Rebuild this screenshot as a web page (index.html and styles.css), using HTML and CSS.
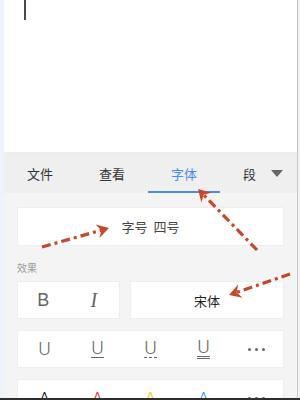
FILE: index.html
```html
<!DOCTYPE html>
<html lang="zh">
<head>
<meta charset="utf-8">
<link rel="stylesheet" href="styles.css">
</head>
<body>
<div class="screen">
  <div class="frame">
    <div class="left-strip"></div>
    <div class="main">
      <div class="editor"><span class="cursor"></span></div>
      <div class="tabbar">
        <div class="tabs">
          <div class="tab">文件</div>
          <div class="tab">查看</div>
          <div class="tab active">字体</div>
          <div class="tab last">段</div>
        </div>
        <div class="more"><span class="tri"></span></div>
      </div>
      <div class="panel">
        <div class="card size"><span>字号</span><span>四号</span></div>
        <div class="label">效果</div>
        <div class="row2">
          <div class="card bi">
            <span class="cell b">B</span>
            <span class="cell i">I</span>
          </div>
          <div class="card font">宋体</div>
        </div>
        <div class="card row5">
          <span class="cell"><span class="u">U</span></span>
          <span class="cell"><span class="u single">U</span></span>
          <span class="cell"><span class="u dashed">U</span></span>
          <span class="cell"><span class="u double">U</span></span>
          <span class="cell dots"><i></i><i></i><i></i></span>
        </div>
        <div class="card row5">
          <span class="cell a black">A</span>
          <span class="cell a red">A</span>
          <span class="cell a yellow">A</span>
          <span class="cell a blue">A</span>
          <span class="cell dots"><i></i><i></i><i></i></span>
        </div>
      </div>
    </div>
    <div class="right-strip"></div>
  </div>
  <div class="bottombar"></div>
  <svg class="arrows" width="300" height="400" viewBox="0 0 300 400">
    <g stroke="#c4482c" stroke-width="3.2" fill="none" stroke-dasharray="9 4 3 4">
      <line x1="42" y1="247" x2="101.3" y2="230.2"/>
      <line x1="257" y1="250" x2="203.6" y2="194.8"/>
      <line x1="290" y1="274" x2="236.6" y2="292.4"/>
    </g>
    <g fill="#c4482c">
      <polygon points="109,228 99.4,238 101.3,230.2 95.6,224.6"/>
      <polygon points="198,189 211.3,192.7 203.6,194.8 201.3,202.5"/>
      <polygon points="229,295 242.7,297.7 236.6,292.4 238.1,284.5"/>
    </g>
  </svg>
</div>
</body>
</html>
```
FILE: styles.css
```css
* { box-sizing: border-box; }
html, body { margin: 0; padding: 0; }
body {
  width: 300px;
  height: 400px;
  overflow: hidden;
  font-family: "Noto Sans CJK SC", "Noto Sans", sans-serif;
  background: #fff;
}
.screen {
  position: relative;
  width: 300px;
  height: 400px;
  display: flex;
  flex-direction: column;
}
.frame {
  display: flex;
  height: 398px;
  flex-shrink: 0;
}
.left-strip {
  width: 4px;
  background: #eef3fa;
}
.main {
  width: 293px;
  display: flex;
  flex-direction: column;
  overflow: hidden;
}
.right-strip {
  width: 3px;
  background: #f2f2f2;
  border-left: 1px solid #c9c9c9;
}
.bottombar {
  height: 2px;
  flex-shrink: 0;
  background: #2e2e2e;
}
.editor {
  height: 153px;
  flex-shrink: 0;
  background: #fff;
  padding-left: 20px;
  border-bottom: 1px solid #ececec;
}
.cursor {
  display: block;
  width: 2px;
  height: 20px;
  background: #4a4a4a;
}
.tabbar {
  height: 40px;
  flex-shrink: 0;
  background: #efefef;
  display: flex;
}
.tabs {
  width: 252px;
  display: flex;
}
.tab {
  flex: 0 0 72px;
  display: flex;
  align-items: center;
  justify-content: center;
  font-size: 13px;
  color: #333;
  border-bottom: 2px solid transparent;
  padding-top: 2px;
}
.tab.last {
  flex: 0 0 36px;
  justify-content: flex-start;
  padding-left: 23px;
}
.tab.active {
  color: #4a8af4;
  border-bottom-color: #4a8af4;
}
.more {
  flex: 1;
  display: flex;
  align-items: center;
  justify-content: center;
}
.tri {
  width: 0;
  height: 0;
  border-left: 6px solid transparent;
  border-right: 6px solid transparent;
  border-top: 7px solid #666;
}
.panel {
  flex: 1;
  background: #f4f4f4;
  padding: 14px 13px 0 13px;
  display: flex;
  flex-direction: column;
  overflow: hidden;
}
.panel > * { flex-shrink: 0; }
.card {
  background: #fff;
  border: 1px solid #eeeeee;
}
.size {
  height: 39px;
  display: flex;
  align-items: center;
  justify-content: center;
  gap: 6px;
  font-size: 13px;
  color: #444;
}
.label {
  margin-top: 15px;
  font-size: 10px;
  line-height: 14px;
  color: #999;
}
.row2 {
  margin-top: 6px;
  display: flex;
  gap: 10px;
  height: 38px;
}
.bi {
  width: 103px;
  display: flex;
}
.font {
  flex: 1;
  display: flex;
  align-items: center;
  justify-content: center;
  font-size: 13px;
  color: #222;
}
.cell {
  flex: 1;
  display: flex;
  align-items: center;
  justify-content: center;
  color: #666;
}
.b {
  font-family: "Liberation Sans", Arial, sans-serif;
  font-size: 18px;
  color: #666;
}
.i {
  font-family: "Liberation Serif", serif;
  font-style: italic;
  font-size: 20px;
  color: #666;
}
.row5 {
  margin-top: 11px;
  height: 38px;
  display: flex;
}
.u {
  font-family: Roboto, "Liberation Sans", sans-serif;
  font-weight: 300;
  font-size: 19px;
  line-height: 16px;
  color: #666;
  padding-bottom: 1px;
}
.u.single { border-bottom: 1px solid #666; }
.u.dashed { border-bottom: 1px dashed #666; }
.u.double { border-bottom: 3px double #666; }
.dots {
  gap: 4px;
}
.dots i {
  display: block;
  width: 3px;
  height: 3px;
  border-radius: 50%;
  background: #666;
}
.a {
  font-family: Roboto, "Liberation Sans", sans-serif;
  font-weight: 300;
  font-size: 19px;
}
.a.black { color: #111; }
.a.red { color: #f21d1d; }
.a.yellow { color: #f5c400; }
.a.blue { color: #3d8ef0; }
.arrows {
  position: absolute;
  left: 0;
  top: 0;
  pointer-events: none;
}
```
